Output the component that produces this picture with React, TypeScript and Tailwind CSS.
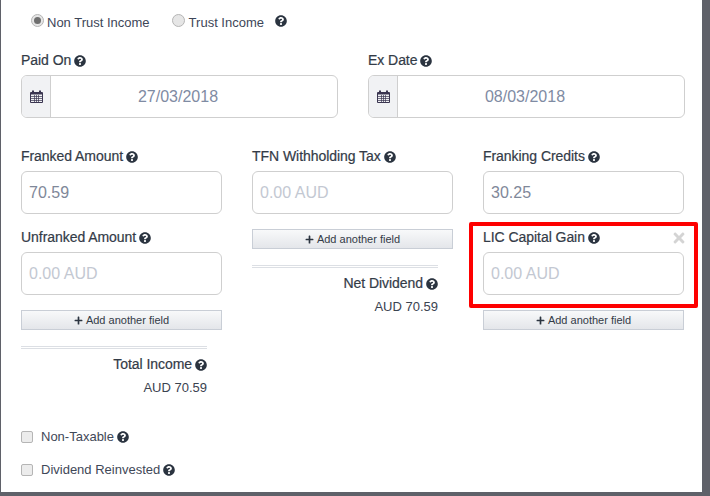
import { FaPlus, FaQuestionCircle, FaTimes } from "react-icons/fa";

function Help({ className = "" }: { className?: string }) {
  return <FaQuestionCircle className={`inline-block h-[12px] w-[12px] text-[#2b3440] ${className}`} />;
}

function CalendarIcon() {
  return (
    <svg width="13" height="13" viewBox="0 0 13 13" fill="none" className="text-[#3a3550]">
      <path d="M0.5 2.5h12v10h-12z" stroke="currentColor" />
      <path d="M1 2h11v2.5H1z" fill="currentColor" />
      <path d="M3 0.5v2.5M10 0.5v2.5" stroke="currentColor" strokeWidth="2" />
      <path d="M4.5 5v7M6.5 5v7M8.5 5v7M1 6.5h11M1 8.5h11M1 10.5h11" stroke="currentColor" strokeWidth="0.7" />
    </svg>
  );
}

function Label({ text }: { text: string }) {
  return (
    <div className="flex h-[20px] items-center gap-[3px] pt-[1px] text-[14px] font-medium tracking-[-0.05px] text-[#333b47] [-webkit-text-stroke:0.2px_#333b47]">
      {text}
      <Help />
    </div>
  );
}

function DateField({ label, value }: { label: string; value: string }) {
  return (
    <div className="w-[317px]">
      <Label text={label} />
      <div className="mt-[5px] flex h-[43px] overflow-hidden rounded-[6px] border border-[#cfcfcf]">
        <div className="flex w-[29px] items-center justify-center border-r border-[#cfcfcf] bg-[#f1f2f4]">
          <CalendarIcon />
        </div>
        <div className="flex flex-1 items-center justify-center pr-[32px] text-[16px] text-[#7f8ba3]">{value}</div>
      </div>
    </div>
  );
}

function AmountField({ label, value, placeholder }: { label: string; value?: string; placeholder?: string }) {
  return (
    <div>
      <Label text={label} />
      <div
        className={`mt-[5px] flex h-[43px] items-center rounded-[6px] border border-[#cfcfcf] px-[7px] text-[16px] ${
          value ? "text-[#7f8899]" : "text-[#c3c8d2]"
        }`}
      >
        {value ?? placeholder}
      </div>
    </div>
  );
}

function AddButton() {
  return (
    <div className="flex h-[20px] items-center justify-center gap-[3px] border border-[#c9ced6] bg-gradient-to-b from-[#f8f9fa] to-[#e4e6ea] pt-[1px] text-[11px] text-[#333b47]">
      <FaPlus className="h-[9px] w-[9px] text-[#2b3440]" />
      Add another field
    </div>
  );
}

function Total({ label, value }: { label: string; value: string }) {
  return (
    <div className="pr-[15px] text-right">
      <div className="mt-[16px] h-[3px] border-y border-[#dcdfe4]" />
      <div className="mt-[5px] flex h-[20px] items-center justify-end gap-[3px] pt-[1px] text-[14px] font-medium tracking-[-0.05px] text-[#333b47] [-webkit-text-stroke:0.2px_#333b47]">
        {label}
        <Help />
      </div>
      <div className="mt-[4px] h-[20px] text-[13px] leading-[20px] text-[#3b4350]">{value}</div>
    </div>
  );
}

function Check({ label }: { label: string }) {
  return (
    <div className="flex h-[20px] items-center text-[13px] text-[#3f4858]">
      <span className="mr-[8px] h-[12px] w-[12px] rounded-[2px] border border-[#b5b5b5] bg-[#ececec]" />
      {label}
      <Help className="ml-[3px]" />
    </div>
  );
}

export default function App() {
  return (
    <div className="relative h-[496px] w-[710px] overflow-hidden bg-[#5f6169] font-['Liberation_Sans',Arial,sans-serif]">
      <div className="ml-[1px] h-[492px] w-[701px] bg-white pl-[20px] pr-[17px] pt-[13px]">
        <div className="flex h-[20px] items-center text-[13px] text-[#3d4658]">
          <span className="-mt-[5px] ml-[10px] mr-[3px] flex h-[13px] w-[13px] items-center justify-center rounded-full border border-[#b5b5b5] bg-[#e6e6e6]">
            <span className="h-[7px] w-[7px] rounded-full bg-[#6f6f6f]" />
          </span>
          Non Trust Income
          <span className="-mt-[5px] ml-[22px] mr-[4px] h-[13px] w-[13px] rounded-full border border-[#b5b5b5] bg-[#e6e6e6]" />
          Trust Income
          <Help className="-mt-[5px] ml-[11px]" />
        </div>

        <div className="mt-[17px] flex gap-[30px]">
          <DateField label="Paid On" value="27/03/2018" />
          <DateField label="Ex Date" value="08/03/2018" />
        </div>

        <div className="mt-[28px] grid w-[663px] grid-cols-[201px_201px_201px] gap-x-[30px]">
          <div>
            <AmountField label="Franked Amount" value="70.59" />
            <div className="mt-[13px]">
              <AmountField label="Unfranked Amount" placeholder="0.00 AUD" />
            </div>
            <div className="mt-[15px]">
              <AddButton />
            </div>
            <Total label="Total Income" value="AUD 70.59" />
          </div>
          <div>
            <AmountField label="TFN Withholding Tax" placeholder="0.00 AUD" />
            <div className="mt-[15px]">
              <AddButton />
            </div>
            <Total label="Net Dividend" value="AUD 70.59" />
          </div>
          <div>
            <AmountField label="Franking Credits" value="30.25" />
            <div className="mt-[13px]">
              <AmountField label="LIC Capital Gain" placeholder="0.00 AUD" />
            </div>
            <div className="mt-[15px]">
              <AddButton />
            </div>
          </div>
        </div>

        <div className="mt-[29px] flex flex-col gap-[13px]">
          <Check label="Non-Taxable" />
          <Check label="Dividend Reinvested" />
        </div>
      </div>

      <FaTimes className="absolute left-[673px] top-[230px] h-[16px] w-[12px] text-[#d4d4d4]" />
      <div className="absolute left-[469px] top-[222px] h-[86px] w-[229px] rounded-[2px] border-[4px] border-[#fe0000]" />
    </div>
  );
}
